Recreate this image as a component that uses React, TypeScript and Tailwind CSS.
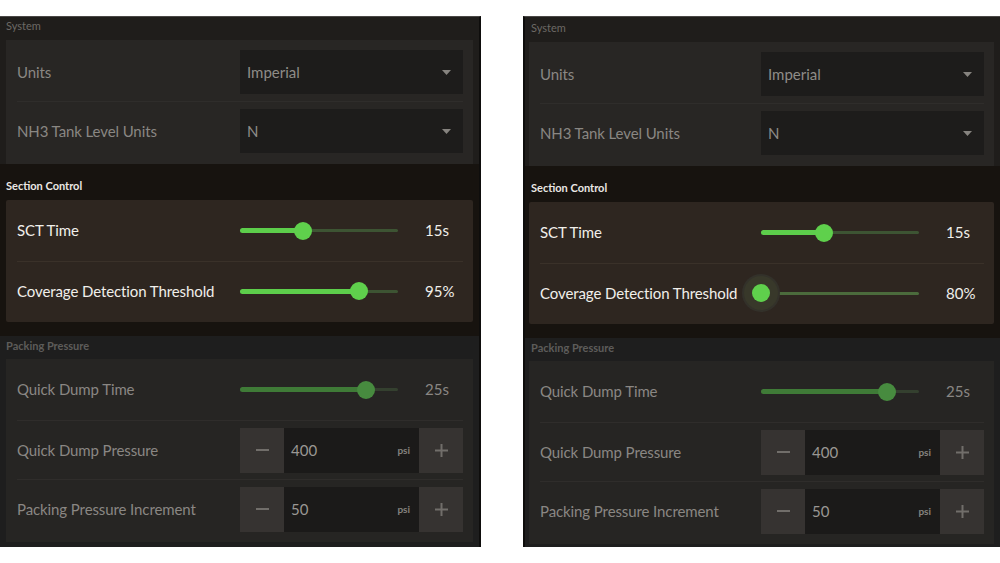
import { ReactNode } from 'react';

type Tone = 'bright' | 'dim';

interface SliderProps {
  value: number;
  tone: Tone;
  label: string;
  focused?: boolean;
}

function Slider({ value, tone, label, focused }: SliderProps) {
  const bright = tone === 'bright';
  const fill = bright ? 'bg-[#5dce4b]' : 'bg-[#3f7b37]';
  const rest = bright ? (focused ? 'bg-[#4b6b3c]' : 'bg-[#3d5433]') : 'bg-[#34402f]';
  const thumb = bright ? 'bg-[#5fd04c]' : 'bg-[#478b3f]';
  return (
    <div className="flex items-center w-[223px]">
      <div className="relative w-[158px] h-[18px] flex items-center">
        <div className={`absolute left-0 right-0 h-[3px] rounded-full ${rest}`} />
        <div
          className={`absolute left-0 h-[5px] rounded-full ${fill}`}
          style={{ width: `${value * 100}%` }}
        />
        {focused && (
          <div
            className="absolute w-[34px] h-[34px] -ml-[17px] rounded-full bg-[#38382a] ring-2 ring-[#33312a]"
            style={{ left: `${value * 100}%` }}
          />
        )}
        <div
          className={`absolute w-[18px] h-[18px] -ml-[9px] rounded-full ${thumb}`}
          style={{ left: `${value * 100}%` }}
        />
      </div>
      <span
        className={`ml-[27px] text-[15px] ${bright ? 'text-[#f1efeb]' : 'text-[#8a8783]'}`}
      >
        {label}
      </span>
    </div>
  );
}

function Dropdown({ value }: { value: string }) {
  return (
    <div className="w-[223px] h-[44px] bg-[#1d1c1b] flex items-center justify-between pl-[7px] pr-[12px]">
      <span className="text-[15px] text-[#8f8c88]">{value}</span>
      <svg width="9" height="5" viewBox="0 0 9 5">
        <path d="M0 0h9L4.5 5z" fill="#86837f" />
      </svg>
    </div>
  );
}

function Stepper({ value }: { value: string }) {
  return (
    <div className="w-[223px] h-[45px] flex">
      <div className="w-[44px] bg-[#363331] flex items-center justify-center">
        <div className="w-[13px] h-[2px] bg-[#716e6a]" />
      </div>
      <div className="flex-1 bg-[#1b1a19] flex items-center justify-between pl-[7px] pr-[9px]">
        <span className="text-[15px] text-[#9a9793]">{value}</span>
        <span className="text-[10px] font-bold text-[#86837f]">psi</span>
      </div>
      <div className="w-[44px] bg-[#363331] flex items-center justify-center">
        <svg width="13" height="13" viewBox="0 0 13 13">
          <path d="M6.5 0v13M0 6.5h13" stroke="#716e6a" strokeWidth="2" />
        </svg>
      </div>
    </div>
  );
}

interface RowProps {
  label: string;
  children: ReactNode;
  active?: boolean;
  first?: boolean;
  height: string;
}

function Row({ label, children, active, first, height }: RowProps) {
  const line = active ? 'border-[#3a3129]' : 'border-[#2f2d2b]';
  return (
    <div className={`flex items-center ${height} ${first ? '' : `border-t ${line}`}`}>
      <span
        className={`flex-1 text-[15px] tracking-[-0.1px] ${active ? 'text-[#f1efeb]' : 'text-[#8a8783]'}`}
      >
        {label}
      </span>
      {children}
    </div>
  );
}

function Panel({ side }: { side: 'left' | 'right' }) {
  const left = side === 'left';
  const cardX = left ? 'ml-[6px] mr-[6px]' : 'ml-[4px] mr-[6px]';
  return (
    <div
      className={`flex flex-col h-[531px] bg-[#1f1d1b] border-t border-[#4a4846] ${
        left ? 'w-[481px] border-r-2 border-r-[#0e0d0c]' : 'w-[477px] border-l-2 border-l-[#0e0d0c] pt-[2px]'
      }`}
    >
      {/* System */}
      <div className="h-[23px] px-[6px] pt-[1px] text-[11px] text-[#6c6965]">System</div>
      <div className={`bg-[#282624] pl-[11px] pr-[10px] pt-[3px] pb-[4px] ${cardX}`}>
        <Row label="Units" first height="h-[58px]">
          <Dropdown value="Imperial" />
        </Row>
        <Row label="NH3 Tank Level Units" height="h-[59px]">
          <Dropdown value="N" />
        </Row>
      </div>

      {/* Section Control */}
      <div className="bg-[#17130f] pb-[14px]">
        <div className="h-[36px] px-[6px] pt-[14px] text-[11px] font-bold text-[#ebe8e4]">
          Section Control
        </div>
        <div className={`bg-[#2e2620] rounded-[2px] pl-[11px] pr-[10px] pb-[2px] ${cardX}`}>
          <Row label="SCT Time" active first height="h-[61px]">
            <Slider value={0.4} tone="bright" label="15s" />
          </Row>
          <Row label="Coverage Detection Threshold" active height="h-[59px]">
            {left ? (
              <Slider value={0.755} tone="bright" label="95%" />
            ) : (
              <Slider value={0} tone="bright" label="80%" focused />
            )}
          </Row>
        </div>
      </div>

      {/* Packing Pressure */}
      <div className="bg-[#1e1e1e] flex-1 flex flex-col">
        <div className="h-[23px] px-[6px] pt-[2px] text-[11px] font-bold text-[#5d5c5a]">
          Packing Pressure
        </div>
        <div className={`bg-[#262523] pl-[11px] pr-[10px] pb-[4px] ${cardX}`}>
          <Row label="Quick Dump Time" first height="h-[61px]">
            <Slider value={0.8} tone="dim" label="25s" />
          </Row>
          <Row label="Quick Dump Pressure" height="h-[59px]">
            <Stepper value="400" />
          </Row>
          <Row label="Packing Pressure Increment" height="h-[59px]">
            <Stepper value="50" />
          </Row>
        </div>
      </div>
    </div>
  );
}

export default function App() {
  return (
    <div className="w-[1000px] h-[563px] bg-white flex items-start gap-[42px] pt-[16px] overflow-hidden font-['Lato',sans-serif]">
      <Panel side="left" />
      <Panel side="right" />
    </div>
  );
}
